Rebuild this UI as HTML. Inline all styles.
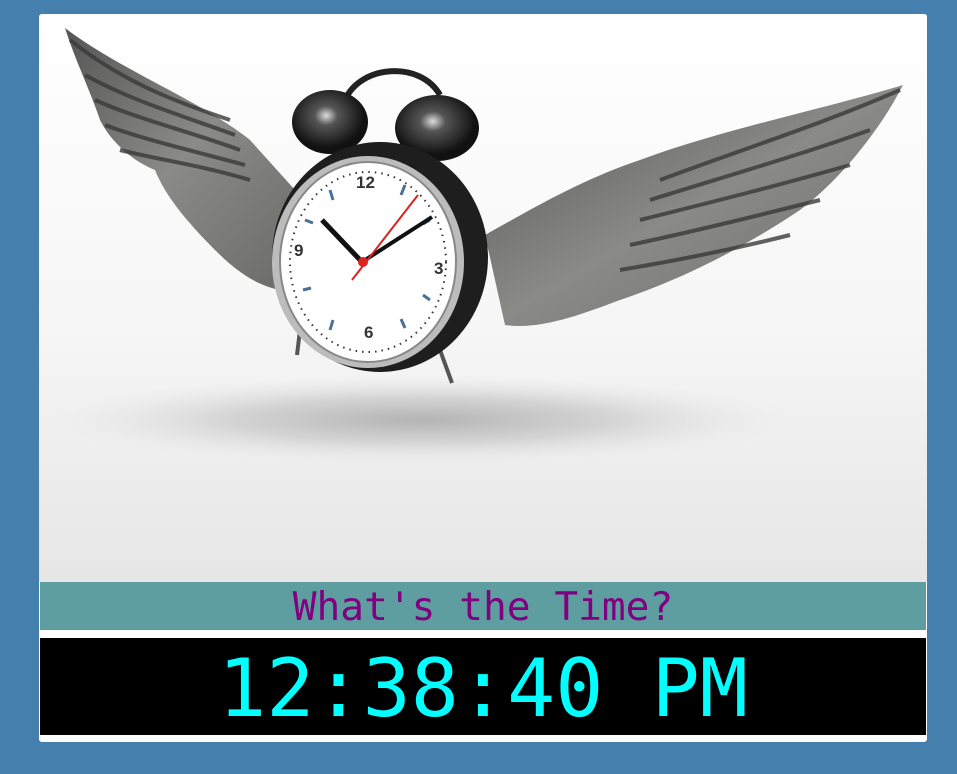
<!DOCTYPE html>
<html><head><meta charset="utf-8"><style>
html,body{margin:0;padding:0;background:#447fae;width:957px;height:774px;overflow:hidden}
.card{position:absolute;left:39px;top:14px;width:888px;height:728px;background:#fff;border-radius:3px;overflow:hidden}
.bar{position:absolute;left:1px;top:568px;width:886px;height:48px;background:#5f9ea0;color:#800080;font:39.5px "DejaVu Sans Mono","Liberation Mono",monospace;text-align:center;line-height:50px}
.time{position:absolute;left:1px;top:624px;width:886px;height:97px;background:#000;color:#00ffff;font:80px "DejaVu Sans Mono","Liberation Mono",monospace;text-align:center;line-height:101px}
svg{position:absolute;left:0;top:0}
</style></head><body>
<div class="card">
<svg width="888" height="568" viewBox="39 14 888 568">
<defs>
<linearGradient id="bg" x1="0" y1="0" x2="0" y2="1"><stop offset="0" stop-color="#fff"/><stop offset="0.55" stop-color="#f6f6f6"/><stop offset="1" stop-color="#e6e6e6"/></linearGradient>
<radialGradient id="sh"><stop offset="0" stop-color="#b4b4b4"/><stop offset="0.5" stop-color="#d4d4d4"/><stop offset="1" stop-color="#eaeaea" stop-opacity="0"/></radialGradient>
<linearGradient id="wing" x1="0" y1="0" x2="1" y2="1"><stop offset="0" stop-color="#555"/><stop offset="0.5" stop-color="#8a8a88"/><stop offset="1" stop-color="#6a6a68"/></linearGradient>
<radialGradient id="bell" cx="0.45" cy="0.4"><stop offset="0" stop-color="#ddd"/><stop offset="0.3" stop-color="#555"/><stop offset="1" stop-color="#111"/></radialGradient>
</defs>
<rect x="39" y="14" width="888" height="568" fill="url(#bg)"/>
<ellipse cx="420" cy="420" rx="380" ry="45" fill="url(#sh)"/>
<path d="M65,28 C120,70 200,100 250,140 L295,190 L280,290 C255,285 235,270 215,250 C185,220 165,195 155,170 C130,160 110,140 100,120 C90,90 75,60 65,28Z" fill="url(#wing)"/>
<g stroke="#3a3a3a" stroke-width="4" fill="none" opacity="0.8">
<path d="M70,40 C120,80 170,100 230,120"/><path d="M85,75 C130,100 180,115 235,135"/><path d="M95,100 C140,120 185,130 240,150"/><path d="M105,125 C145,140 190,150 245,165"/><path d="M120,150 C160,160 200,165 250,180"/>
</g>
<path d="M903,85 C820,110 720,130 640,160 C580,180 530,210 485,235 L505,325 C540,330 580,315 620,300 C680,280 740,250 800,210 C840,180 880,130 903,85Z" fill="url(#wing)"/>
<g stroke="#3a3a3a" stroke-width="4" fill="none" opacity="0.8">
<path d="M900,90 C820,125 740,150 660,180"/><path d="M870,130 C800,155 730,175 650,200"/><path d="M850,165 C780,185 720,200 640,220"/><path d="M820,200 C760,215 700,230 630,245"/><path d="M790,235 C730,250 680,260 620,270"/>
</g>
<path d="M300,330 L297,355" stroke="#555" stroke-width="4"/>
<path d="M440,350 L452,383" stroke="#555" stroke-width="4"/>
<path d="M345,100 C360,65 420,60 440,95" stroke="#222" stroke-width="6" fill="none"/>
<ellipse cx="330" cy="122" rx="38" ry="32" fill="url(#bell)"/>
<ellipse cx="437" cy="128" rx="42" ry="33" fill="url(#bell)"/>
<ellipse cx="380" cy="257" rx="108" ry="115" fill="#1e1e1e"/>
<ellipse cx="368" cy="262" rx="96" ry="106" fill="#bcbcbc"/>
<ellipse cx="368" cy="262" rx="88" ry="100" fill="#fff" stroke="#888" stroke-width="2"/>
<ellipse cx="368" cy="262" rx="78" ry="90" fill="none" stroke="#333" stroke-width="2" stroke-dasharray="1.5 5"/>
<g font-family="Liberation Sans,sans-serif" font-weight="bold" fill="#333" font-size="17">
<text x="356" y="188">12</text><text x="434" y="274">3</text><text x="364" y="338">6</text><text x="294" y="256">9</text>
</g>
<g stroke="#4a6f98" stroke-width="3">
<path d="M330,190 l3,10"/><path d="M405,185 l-4,10"/><path d="M430,220 l-7,4"/><path d="M430,300 l-7,-5"/><path d="M405,328 l-4,-9"/><path d="M330,330 l3,-10"/><path d="M303,290 l8,-2"/><path d="M305,220 l8,3"/>
</g>
<path d="M322,220 L362,262" stroke="#111" stroke-width="5"/>
<path d="M362,262 L432,217" stroke="#111" stroke-width="4"/>
<path d="M352,280 L418,195" stroke="#d22" stroke-width="2"/>
<circle cx="363" cy="262" r="5" fill="#d22"/>
</svg>
<div class="bar">What's the Time?</div>
<div class="time">12:38:40 PM</div>
</div>
</body></html>
